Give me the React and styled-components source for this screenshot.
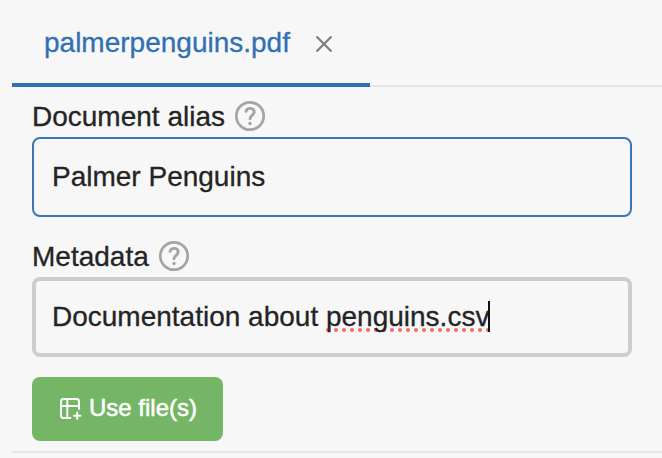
import React from "react";
import styled, { createGlobalStyle } from "styled-components";

const GlobalStyle = createGlobalStyle`
  * { box-sizing: border-box; }
  body {
    margin: 0;
    background: #f7f7f7;
    color: #242424;
    font-family: "Liberation Sans", Arial, sans-serif;
    overflow: hidden;
  }
`;

const Panel = styled.main`
  width: 662px;
  height: 458px;
  padding-left: 12px;
  background: #f7f7f7;
  -webkit-text-stroke: 0.3px currentColor;
`;

const TabBar = styled.div`
  display: flex;
  height: 87px;
  box-shadow: inset 0 -2px #e5e5e5;
`;

const Tab = styled.div`
  display: flex;
  align-items: center;
  width: 358px;
  padding-left: 32px;
  border-bottom: 4px solid #3070b3;
  color: #3070b3;
  font-size: 28px;
  line-height: 32px;
  white-space: nowrap;
`;

const TabName = styled.span`
  width: 248px;
  margin-top: 2px;
`;

const CloseButton = styled.button`
  display: flex;
  margin: 5px 0 0 24px;
  padding: 0;
  border: 0;
  background: none;
`;

const Form = styled.form`
  height: 366px;
  padding: 10px 30px 0 20px;
  border-bottom: 2px solid #e5e5e5;
`;

const Field = styled.div`
  height: 140px;
`;

const Label = styled.label`
  display: flex;
  align-items: center;
  gap: 9px;
  height: 38px;
  margin-bottom: 2px;
  font-size: 28px;
  line-height: 40px;
  white-space: nowrap;
`;

const LabelText = styled.span`
  width: ${(p) => p.$width}px;
  height: 38px;
`;

const TextBox = styled.div`
  display: flex;
  align-items: center;
  height: 80px;
  padding-left: ${(p) => (p.$focused ? 16 : 18)}px;
  border: ${(p) => (p.$focused ? "4px solid #cdcdcd" : "2px solid #3878b6")};
  border-radius: 8px;
  font-size: 28px;
  line-height: 32px;
  white-space: pre;
`;

const Misspelled = styled.span`
  display: inline-block;
  height: 32px;
  background: radial-gradient(circle at 2px 2px, #f4736e 1.7px, transparent 2.3px) 0 27px / 8px 4px repeat-x;
`;

const Caret = styled.span`
  width: 2px;
  height: 31px;
  margin: -1px 0 0 -1px;
  background: #111;
`;

const SubmitButton = styled.button`
  display: flex;
  align-items: center;
  gap: 7px;
  width: 191px;
  height: 64px;
  padding: 0 0 0 26px;
  border: 0;
  border-radius: 8px;
  background: #75b666;
  color: #fff;
  font-family: inherit;
  font-size: 24px;
  line-height: 28px;
  -webkit-text-stroke: 0.5px #fff;
  white-space: nowrap;
`;

const ButtonText = styled.span`
  margin-top: -2px;
`;

const ButtonIcon = styled.svg`
  margin-top: -2px;
`;

function HelpIcon() {
  return (
    <svg width="32" height="32" viewBox="0 0 32 32" fill="none" stroke="#a4a4a4">
      <circle cx="16" cy="16" r="13.7" strokeWidth="2.7" />
      <path d="M12 11.3C13.2 7.2 20.2 7.4 20.2 12C20.2 15.2 16 15.6 16 18.8" strokeWidth="2.9" strokeLinecap="round" />
      <circle cx="16" cy="23.5" r="1.7" fill="#a4a4a4" stroke="none" />
    </svg>
  );
}

function CloseIcon() {
  return (
    <svg width="16" height="16" viewBox="0 0 16 16" stroke="#7e7e7e" strokeWidth="2.2">
      <path d="M0.5 0.5l15 15M15.5 0.5l-15 15" />
    </svg>
  );
}

function TablePlusIcon() {
  return (
    <ButtonIcon width="24" height="24" viewBox="0 0 24 24" fill="none" stroke="#fff" strokeWidth="1.9" strokeLinecap="round">
      <path d="M21 13V5.5Q21 3 18.5 3H5.5Q3 3 3 5.5V19.5Q3 22 5.5 22H12.5M3 10H21M9.3 3V22M16 19.7H22.4M19.2 16.5V22.9" />
    </ButtonIcon>
  );
}

export default function App() {
  return (
    <>
      <GlobalStyle />
      <Panel>
        <TabBar>
          <Tab>
            <TabName>palmerpenguins.pdf</TabName>
            <CloseButton aria-label="Close">
              <CloseIcon />
            </CloseButton>
          </Tab>
        </TabBar>
        <Form>
          <Field>
            <Label>
              <LabelText $width={193}>Document alias</LabelText>
              <HelpIcon />
            </Label>
            <TextBox>
              <span>Palmer Penguins</span>
            </TextBox>
          </Field>
          <Field>
            <Label>
              <LabelText $width={117}>Metadata</LabelText>
              <HelpIcon />
            </Label>
            <TextBox $focused>
              <span>
                Documentation about <Misspelled>penguins.csv</Misspelled>
              </span>
              <Caret />
            </TextBox>
          </Field>
          <SubmitButton type="button">
            <TablePlusIcon />
            <ButtonText>Use file(s)</ButtonText>
          </SubmitButton>
        </Form>
      </Panel>
    </>
  );
}
